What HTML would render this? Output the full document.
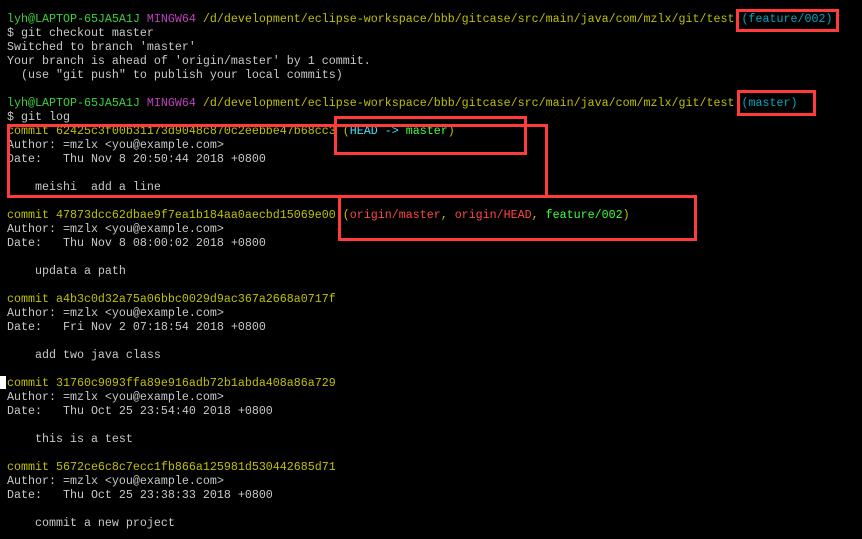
<!DOCTYPE html>
<html><head><meta charset="utf-8"><style>
html,body{margin:0;padding:0;background:#000;width:862px;height:539px;overflow:hidden}
pre{position:absolute;left:7px;top:12px;margin:0;font-family:"Liberation Mono",monospace;font-size:11.67px;line-height:14px;color:#c8c8c8;white-space:pre}
.g{color:#3bd13b}.m{color:#c040c0}.y{color:#bfbf00}.c{color:#00a5c0}.h{color:#c0c000}
.hc{color:#40e0ff}.hg{color:#40ff40}.r{color:#ff4545}
.box{position:absolute;border:3px solid #ff3b3b;box-sizing:border-box}
</style></head><body>
<pre><span class="g">lyh@LAPTOP-65JA5A1J</span> <span class="m">MINGW64</span> <span class="y">/d/development/eclipse-workspace/bbb/gitcase/src/main/java/com/mzlx/git/test</span> <span class="c">(feature/002)</span>
$ git checkout master
Switched to branch 'master'
Your branch is ahead of 'origin/master' by 1 commit.
  (use "git push" to publish your local commits)

<span class="g">lyh@LAPTOP-65JA5A1J</span> <span class="m">MINGW64</span> <span class="y">/d/development/eclipse-workspace/bbb/gitcase/src/main/java/com/mzlx/git/test</span> <span class="c">(master)</span>
$ git log
<span class="h">commit 62425c3f00b31173d9048c870c2eebbe47b68cc3 (</span><span class="hc">HEAD -&gt; </span><span class="hg">master</span><span class="h">)</span>
Author: =mzlx &lt;you@example.com&gt;
Date:   Thu Nov 8 20:50:44 2018 +0800

    meishi  add a line

<span class="h">commit 47873dcc62dbae9f7ea1b184aa0aecbd15069e00 (</span><span class="r">origin/master</span><span class="h">, </span><span class="r">origin/HEAD</span><span class="h">, </span><span class="hg">feature/002</span><span class="h">)</span>
Author: =mzlx &lt;you@example.com&gt;
Date:   Thu Nov 8 08:00:02 2018 +0800

    updata a path

<span class="h">commit a4b3c0d32a75a06bbc0029d9ac367a2668a0717f</span>
Author: =mzlx &lt;you@example.com&gt;
Date:   Fri Nov 2 07:18:54 2018 +0800

    add two java class

<span class="h">commit 31760c9093ffa89e916adb72b1abda408a86a729</span>
Author: =mzlx &lt;you@example.com&gt;
Date:   Thu Oct 25 23:54:40 2018 +0800

    this is a test

<span class="h">commit 5672ce6c8c7ecc1fb866a125981d530442685d71</span>
Author: =mzlx &lt;you@example.com&gt;
Date:   Thu Oct 25 23:38:33 2018 +0800

    commit a new project</pre>
<div style="position:absolute;left:0;top:376px;width:6px;height:13px;background:#fff"></div>
<div class="box" style="left:736px;top:9px;width:103px;height:23px"></div>
<div class="box" style="left:737px;top:90px;width:79px;height:26px"></div>
<div class="box" style="left:334px;top:116px;width:193px;height:39px"></div>
<div class="box" style="left:7px;top:124px;width:541px;height:74px"></div>
<div class="box" style="left:338px;top:195px;width:359px;height:46px"></div>
</body></html>
